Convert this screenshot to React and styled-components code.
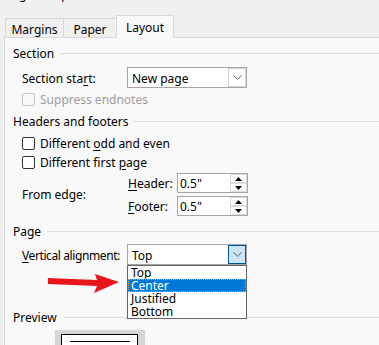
import React from "react";
import styled, { createGlobalStyle } from "styled-components";

const GlobalStyle = createGlobalStyle`
  html, body {
    margin: 0;
    padding: 0;
    background: #f0f0f0;
  }
  body {
    font-family: "Noto Sans", "Open Sans", sans-serif;
    font-size: 12px;
    color: #000;
  }
`;

const Dialog = styled.div`
  position: relative;
  width: 379px;
  height: 345px;
  overflow: hidden;
  background: #f0f0f0;
  display: flex;
  flex-direction: column;
  white-space: nowrap;
`;

const TitleBar = styled.div`
  height: 9px;
  overflow: hidden;
  flex: none;
`;

const Title = styled.div`
  margin-top: -13px;
  padding-left: 5px;
  line-height: 16px;
`;

const TabStrip = styled.div`
  display: flex;
  align-items: flex-end;
  height: 28px;
  padding-left: 5px;
  flex: none;
`;

const Tab = styled.div`
  position: relative;
  z-index: ${p => (p.$active ? 1 : 0)};
  width: ${p => p.$w}px;
  height: ${p => (p.$active ? 23 : 19)}px;
  margin-bottom: ${p => (p.$active ? -1 : 0)}px;
  margin-left: -1px;
  box-sizing: border-box;
  border: 1px solid #d9d9d9;
  border-bottom: none;
  background: ${p => (p.$active ? "#f9f9f9" : "#f0f0f0")};
  display: flex;
  align-items: center;
  justify-content: center;
  padding-top: 3px;
  padding-bottom: ${p => (p.$active ? 3 : 0)}px;

  &:first-child {
    margin-left: 0;
  }
`;

const Panel = styled.div`
  flex: 1;
  margin-left: 4px;
  border-top: 1px solid #d9d9d9;
  border-left: 1px solid #d9d9d9;
  background: #f9f9f9;
  padding-top: 7px;
`;

const GroupHeader = styled.div`
  display: flex;
  align-items: center;
  height: 16px;
  padding-left: 8px;
  padding-top: 1px;
  box-sizing: border-box;
  margin-top: ${p => p.$mt || 0}px;

  &::after {
    content: "";
    flex: 1;
    height: 1px;
    background: #dcdcdc;
    margin-left: 6px;
  }
`;

const Row = styled.div`
  display: flex;
  align-items: center;
  padding-left: 17px;
  height: ${p => p.$h || 16}px;
  margin-top: ${p => p.$mt || 0}px;
`;

const FieldLabel = styled.div`
  width: 105px;
  flex: none;
  padding-top: 1px;
  letter-spacing: ${p => (p.$tight ? -0.4 : 0)}px;
`;

const Key = styled.span`
  text-decoration: underline;
  text-underline-offset: 2px;
`;

const Select = styled.div`
  position: relative;
  width: 120px;
  height: 21px;
  box-sizing: border-box;
  border: 1px solid #a5a5a5;
  background: #fff;
  display: flex;
  align-items: stretch;
`;

const SelectText = styled.div`
  flex: 1;
  display: flex;
  align-items: center;
  padding-left: 4px;
  padding-top: 1px;
`;

const DropButton = styled.div`
  width: 18px;
  box-sizing: border-box;
  border: 1px solid ${p => (p.$active ? "#005499" : "#d4d4d4")};
  background: ${p => (p.$active ? "#cce4f7" : "#fff")};
  display: flex;
  align-items: center;
  justify-content: center;
`;

const DropList = styled.div`
  position: absolute;
  left: -1px;
  top: calc(100% + 1px);
  width: 120px;
  box-sizing: border-box;
  border: 1px solid #646464;
  background: #fff;
  z-index: 2;
`;

const DropItem = styled.div`
  height: 13px;
  line-height: 13px;
  padding-left: 3px;
  box-sizing: border-box;
  background: ${p => (p.$selected ? "#0078d7" : "#fff")};
  color: ${p => (p.$selected ? "#fff" : "#000")};
  outline: ${p => (p.$selected ? "1px dotted #f0a040" : "none")};
  outline-offset: -1px;
`;

const Checkbox = styled.span`
  width: 13px;
  height: 13px;
  box-sizing: border-box;
  border: 1px solid ${p => (p.$disabled ? "#c6c6c6" : "#333")};
  border-radius: 2px;
  background: ${p => (p.$disabled ? "#f9f9f9" : "#fff")};
  margin-right: 5px;
  flex: none;
`;

const CheckText = styled.span`
  padding-top: 1px;
  color: ${p => (p.$disabled ? "#9d9d9d" : "#000")};
`;

const EdgeBlock = styled.div`
  display: grid;
  grid-template-columns: 105px auto;
  align-items: center;
  padding-left: 17px;
  margin-top: 3px;
`;

const EdgeFields = styled.div`
  display: flex;
  flex-direction: column;
  gap: 3px;
`;

const EdgeRow = styled.div`
  display: flex;
  align-items: center;
  height: 20px;
`;

const EdgeLabel = styled.div`
  width: 49px;
  padding-left: 1px;
  flex: none;
`;

const SpinInput = styled.div`
  width: 71px;
  height: 20px;
  box-sizing: border-box;
  border: 1px solid #a5a5a5;
  background: #fff;
  display: flex;
`;

const SpinText = styled.div`
  flex: 1;
  display: flex;
  align-items: center;
  padding-left: 2px;
`;

const SpinButtons = styled.div`
  width: 17px;
  display: flex;
  flex-direction: column;
`;

const SpinButton = styled.div`
  flex: 1;
  box-sizing: border-box;
  border: 1px solid #dcdcdc;
  display: flex;
  align-items: center;
  justify-content: center;
`;

const PreviewFrame = styled.div`
  margin: 5px 0 0 50px;
  width: 90px;
  height: 20px;
  box-sizing: border-box;
  padding: 4px 0 0 6px;
  background: #d6d6d6;
`;

const PreviewPage = styled.div`
  width: 77px;
  height: 30px;
  box-sizing: border-box;
  border: 1px solid #000;
  background: #fff;
  padding: 6px 0 0 8px;
`;

const PreviewLine = styled.div`
  width: 60px;
  height: 1px;
  background: #000;
`;

const Arrow = styled.svg`
  position: absolute;
  left: 46px;
  top: 270px;
`;

const Chevron = () => (
  <svg width="9" height="5" viewBox="0 0 9 5">
    <path d="M0.5 0.5 L4.5 4.2 L8.5 0.5" fill="none" stroke="#5a5a5a" strokeWidth="1" />
  </svg>
);

const Triangle = ({ up }) => (
  <svg width="7" height="4" viewBox="0 0 7 4">
    <path d={up ? "M0 4 L3.5 0 L7 4 Z" : "M0 0 L3.5 4 L7 0 Z"} fill="#000" />
  </svg>
);

const Spin = ({ value }) => (
  <SpinInput>
    <SpinText>{value}</SpinText>
    <SpinButtons>
      <SpinButton>
        <Triangle up />
      </SpinButton>
      <SpinButton>
        <Triangle />
      </SpinButton>
    </SpinButtons>
  </SpinInput>
);

const alignments = ["Top", "Center", "Justified", "Bottom"];

const App = () => {
  return (
    <>
      <GlobalStyle />
      <Dialog>
        <TitleBar>
          <Title>Page Setup</Title>
        </TitleBar>
        <TabStrip>
          <Tab $w={59}>Margins</Tab>
          <Tab $w={54}>Paper</Tab>
          <Tab $w={58} $active>
            Layout
          </Tab>
        </TabStrip>
        <Panel>
          <GroupHeader>Section</GroupHeader>
          <Row $h={21} $mt={6}>
            <FieldLabel>
              Section sta<Key>r</Key>t:
            </FieldLabel>
            <Select>
              <SelectText>New page</SelectText>
              <DropButton>
                <Chevron />
              </DropButton>
            </Select>
          </Row>
          <Row $mt={3}>
            <Checkbox $disabled />
            <CheckText $disabled>Suppress endnotes</CheckText>
          </Row>

          <GroupHeader $mt={6}>Headers and footers</GroupHeader>
          <Row $mt={6}>
            <Checkbox />
            <CheckText>
              Different <Key>o</Key>dd and even
            </CheckText>
          </Row>
          <Row $mt={3}>
            <Checkbox />
            <CheckText>
              Different first <Key>p</Key>age
            </CheckText>
          </Row>
          <EdgeBlock>
            <div>From edge:</div>
            <EdgeFields>
              <EdgeRow>
                <EdgeLabel>
                  <Key>H</Key>eader:
                </EdgeLabel>
                <Spin value='0.5"' />
              </EdgeRow>
              <EdgeRow>
                <EdgeLabel>
                  <Key>F</Key>ooter:
                </EdgeLabel>
                <Spin value='0.5"' />
              </EdgeRow>
            </EdgeFields>
          </EdgeBlock>

          <GroupHeader $mt={7}>Page</GroupHeader>
          <Row $h={21} $mt={5}>
            <FieldLabel $tight>
              <Key>V</Key>ertical alignment:
            </FieldLabel>
            <Select>
              <SelectText>Top</SelectText>
              <DropButton $active>
                <Chevron />
              </DropButton>
              <DropList>
                {alignments.map(a => (
                  <DropItem key={a} $selected={a === "Center"}>
                    {a}
                  </DropItem>
                ))}
              </DropList>
            </Select>
          </Row>

          <GroupHeader $mt={44}>Preview</GroupHeader>
          <PreviewFrame>
            <PreviewPage>
              <PreviewLine />
            </PreviewPage>
          </PreviewFrame>
        </Panel>
        <Arrow width="76" height="30" viewBox="0 0 76 30">
          <polygon
            points="2,8 51,10 49,4 73,12 48,23 51,16 2,14"
            fill="#e8161b"
          />
        </Arrow>
      </Dialog>
    </>
  );
};

export default App;
